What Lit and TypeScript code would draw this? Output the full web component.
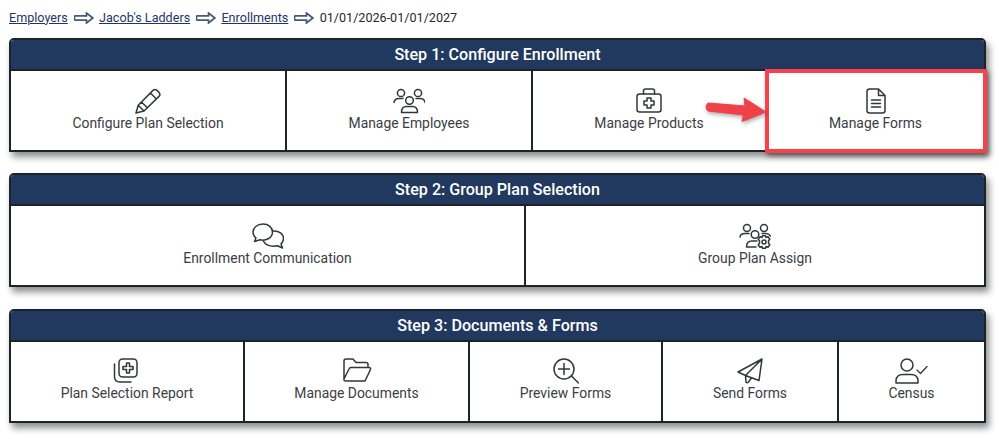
import { LitElement, html, css, svg } from "lit";
import { customElement } from "lit/decorators.js";

const icons: Record<string, { w: number; body: unknown }> = {
  pencil: { w: 26, body: svg`<path d="M1 25 L3.200 17.200 L18 2.400 Q20 .6 22 2.400 L24 4.400 Q25.800 6.400 24 8.400 L9 23 Z M3.200 17.200 L9 23 M15.400 5 L21.400 11 M6.500 14 L12 19.500"/>` },
  people: { w: 32, body: svg`<circle cx="8" cy="5" r="3.600"/><circle cx="25" cy="5" r="3.600"/><circle cx="16.500" cy="12.500" r="3.800"/><path d="M1 14.500 Q1.500 10.500 6 10.500 L10 10.500 M23 10.500 L27 10.500 Q31.500 10.500 32 14.500 M8.500 24.500 Q8.500 18.500 13.500 18.500 L19.500 18.500 Q24.500 18.500 24.500 24.500 Z"/>` },
  kit: { w: 26, body: svg`<rect x="1" y="6" width="24" height="18" rx="2.500"/><path d="M7.500 6 L7.500 3 Q7.500 1 9.500 1 L16.500 1 Q18.500 1 18.500 3 L18.500 6 M11 10 L15 10 L15 13 L18 13 L18 17 L15 17 L15 20 L11 20 L11 17 L8 17 L8 13 L11 13 Z"/>` },
  doc: { w: 20, body: svg`<path d="M12.500 1 L3.500 1 Q1 1 1 3.500 L1 22.500 Q1 25 3.500 25 L16.500 25 Q19 25 19 22.500 L19 7.500 Z M12.500 1 L12.500 7.500 L19 7.500 M5.500 12 L14.500 12 M5.500 15.500 L14.500 15.500 M5.500 19 L14.500 19"/>` },
  chat: { w: 32, body: svg`<path d="M11 1 C5 1 1 5 1 9 C1 11.500 2.200 13.500 4 15 L2.500 18.500 L8 16.800 C13.500 18 20.500 15.500 20.500 9 C20.500 4.500 16.500 1 11 1 Z M21 8 C27 7.500 31.500 11 31.500 15.500 C31.500 17.800 30.500 19.500 29 21 L30.500 25 L25.500 22.800 C20.500 24 13.500 22.800 11.500 18"/>` },
  gear: { w: 32, body: svg`<circle cx="8" cy="5" r="3.500"/><circle cx="25" cy="5" r="3.500"/><circle cx="16" cy="11.500" r="3.800"/><path d="M1 14 Q1.500 10.500 6 10.500 L10 10.500 M23 10.500 L27 10.500 Q30 10.500 31.500 13 M7.500 24 Q7.500 18 13 18 L18 18 M7.500 24 L17 24"/><circle cx="25" cy="19" r="2"/><path d="M23.500 12.800 L26.500 12.800 L27 14.500 L29 13.800 L30.800 16.200 L29.500 17.700 L29.500 20.300 L30.800 21.800 L29 24.200 L27 23.500 L26.500 25.200 L23.500 25.200 L23 23.500 L21 24.200 L19.200 21.800 L20.500 20.300 L20.500 17.700 L19.200 16.200 L21 13.800 L23 14.500 Z"/>` },
  report: { w: 29, body: svg`<rect x="6" y="1" width="18" height="18" rx="3.500"/><path d="M1.500 6 L1.500 18.500 Q1.500 24 7 24 L18 24 M13.500 5 L16.500 5 L16.500 8.500 L20 8.500 L20 11.500 L16.500 11.500 L16.500 15 L13.500 15 L13.500 11.500 L10 11.500 L10 8.500 L13.500 8.500 Z"/>` },
  folder: { w: 30, body: svg`<path d="M2 21 L2 3 Q2 1 4 1 L11 1 L14 4.500 L24 4.500 Q26 4.500 26 6.500 L26 9.500 M2 21 Q1.500 23 4 23 L23 23 L28.500 11.500 Q29 9.500 27 9.500 L9 9.500 Q7.500 9.500 7 11 L2 21 Z"/>` },
  zoom: { w: 26, body: svg`<circle cx="11" cy="11" r="10"/><path d="M18.500 18 L25.500 25 M11 5.500 L11 16.500 M5.500 11 L16.500 11"/>` },
  send: { w: 26, body: svg`<path d="M25 1 L1 14 L8.500 17.500 L22 22.500 Z M25 1 L8.500 17.500 L9 24 Q10 25.500 11.500 24 L14.500 19.800"/>` },
  census: { w: 33, body: svg`<circle cx="12" cy="7" r="6"/><path d="M1 25 L1 22.500 Q1.500 16.500 8 16.500 L16 16.500 Q22.500 16.500 23 22.500 L23 25 Z"/><path d="M22 12 L25.500 15.500 L32 8.500" stroke-width="1.300"/>` },
};

const steps = [
  { title: "Step 1: Configure Enrollment", cols: [276, 246, 234, 217], items: [["pencil", "Configure Plan Selection"], ["people", "Manage Employees"], ["kit", "Manage Products"], ["doc", "Manage Forms"]] },
  { title: "Step 2: Group Plan Selection", cols: [515, 458], items: [["chat", "Enrollment Communication"], ["gear", "Group Plan Assign"]] },
  { title: "Step 3: Documents & Forms", cols: [234, 225, 193, 176, 145], items: [["report", "Plan Selection Report"], ["folder", "Manage Documents"], ["zoom", "Preview Forms"], ["send", "Send Forms"], ["census", "Census"]] },
];

const crumbArrow = html`<svg class="crumb-arrow" viewBox="0 0 20 12" width="20" height="12" aria-hidden="true"><path d="M1 3.800 L12.500 3.800 L12.500 1 L18.800 6 L12.500 11 L12.500 8.200 L1 8.200 Q-.2 6 1 3.800 Z"/></svg>`;

@customElement("app-root")
export class AppRoot extends LitElement {
  static styles = css`
    :host {
      display: block;
      font-family: Roboto, "Liberation Sans", sans-serif;
      color: #3a3e44;
      background: #fff;
    }
    .page {
      padding: 8px 13px 0 9px;
    }
    .crumbs {
      display: flex;
      align-items: center;
      height: 18px;
      margin-bottom: 12px;
      font-size: 12.600px;
      color: #26292e;
    }
    .crumbs a {
      color: #1f3565;
      text-decoration: underline;
    }
    .crumb-arrow {
      margin: 1px 5.300px 0 6px;
      fill: #fff;
      stroke: #46597a;
      stroke-width: 1.700;
    }
    .card {
      position: relative;
      margin-bottom: 21.400px;
      border: 2px solid #1e2329;
      border-radius: 5px 5px 0 0;
      box-shadow: 3px 5px 7px rgba(0, 0, 0, 0.45);
      background: #fff;
    }
    .card:last-child {
      margin-top: 0.200px;
    }
    .head {
      height: 29px;
      display: flex;
      align-items: center;
      justify-content: center;
      background: #21395f;
      color: #fff;
      font-size: 16.100px;
      font-weight: 500;
      border-radius: 3px 3px 0 0;
      border-bottom: 2px solid #1e2329;
    }
    .row {
      display: grid;
      height: 79px;
    }
    .cell {
      display: flex;
      flex-direction: column;
      align-items: center;
      justify-content: center;
      padding-bottom: 1px;
      border-right: 2px solid #1e2329;
      font-size: 13.900px;
      line-height: 19px;
    }
    .cell:last-child {
      border-right: 0;
    }
    .icon {
      height: 26px;
      fill: none;
      stroke: #33363b;
      stroke-width: 1.500;
      stroke-linejoin: round;
      stroke-linecap: round;
      display: block;
    }
    .highlight {
      position: absolute;
      left: 754px;
      top: 29px;
      width: 214px;
      height: 76px;
      border: 4px solid #f8414a;
      box-shadow: 2px 3px 5px rgba(0, 0, 0, 0.45);
      pointer-events: none;
    }
    .pointer {
      position: absolute;
      left: 693px;
      top: 56px;
      filter: drop-shadow(1px 2px 2px rgba(0, 0, 0, 0.35));
    }
  `;

  render() {
    return html`<div class="page">
      <nav class="crumbs">
        <a>Employers</a>${crumbArrow}<a>Jacob's Ladders</a>${crumbArrow}<a>Enrollments</a>${crumbArrow}<span>01/01/2026-01/01/2027</span>
      </nav>
      ${steps.map(
        (s, i) => html`<section class="card">
          <div class="head">${s.title}</div>
          <div class="row" style="grid-template-columns:${s.cols.map((c) => c + "fr").join(" ")}">
            ${s.items.map(([ic, label]) => {
              const d = icons[ic];
              return html`<div class="cell">
                <svg class="icon" width=${d.w} height="26" viewBox="0 0 ${d.w} 26" aria-hidden="true">${d.body}</svg>
                <span>${label}</span>
              </div>`;
            })}
          </div>
          ${i === 0
            ? html`<div class="highlight"></div>
                <svg class="pointer" width="64" height="28" viewBox="0 0 64 28" aria-hidden="true">
                  <path d="M4 7 L41 10 L40 2 L62 16 L38 25.500 L39.500 19 L4 15 Q0 11 4 7 Z" fill="#f0404a" stroke="#f0404a" stroke-width="1" stroke-linejoin="round" />
                </svg>`
            : ""}
        </section>`
      )}
    </div>`;
  }
}
